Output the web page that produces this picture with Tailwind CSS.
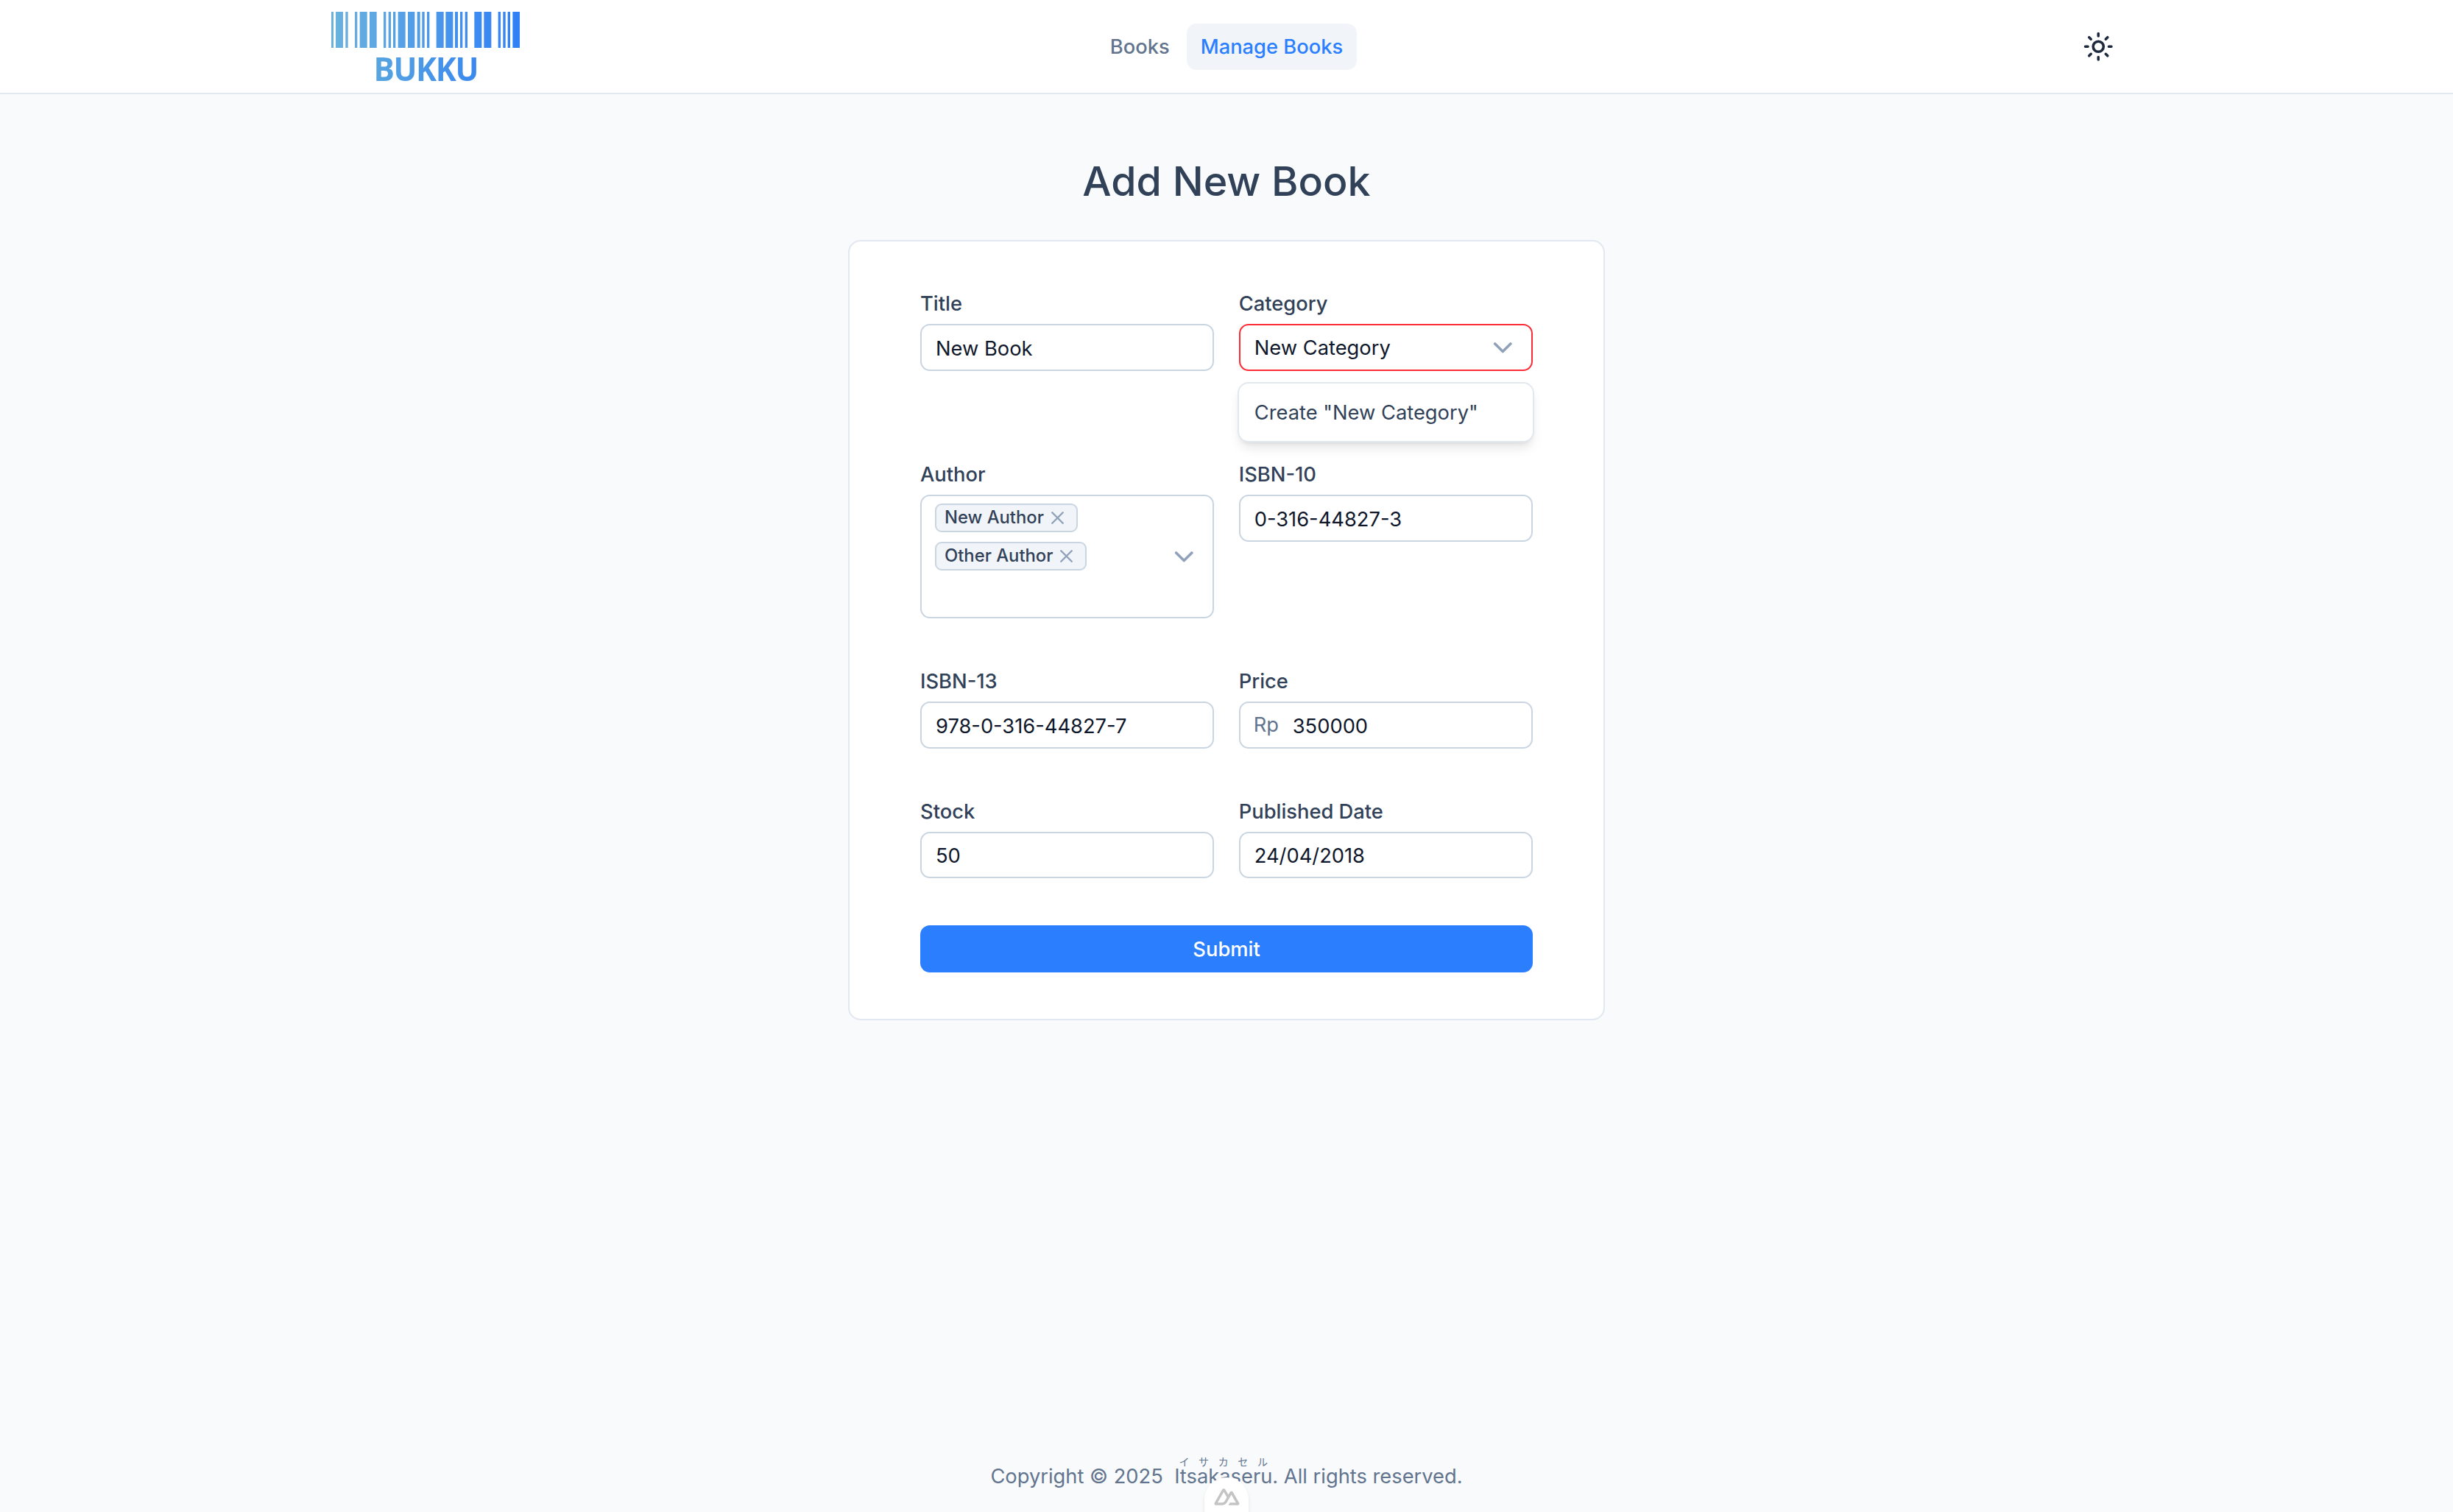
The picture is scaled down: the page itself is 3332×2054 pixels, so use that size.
<!DOCTYPE html>
<html lang="en">
<head>
  <meta charset="UTF-8" />
  <title>Bukku - Add New Book</title>
  <script src="https://cdn.jsdelivr.net/npm/@tailwindcss/browser@4"></script>
</head>
<body class="bg-[#f8fafc] min-h-screen flex flex-col font-['Inter',sans-serif] text-[27.3px] text-[#314158]">
  <!-- Header -->
  <header class="h-[128px] bg-white border-b-2 border-[#e2e8f0] px-[450px] grid grid-cols-[1fr_auto_1fr] items-center">
    <div class="flex flex-col w-[256px] items-center pt-[5px]">
      <svg class="w-[256px] h-[49px] mb-[6px]" viewBox="90 48 768 146" preserveAspectRatio="none">
        <defs>
          <linearGradient id="bars" gradientUnits="userSpaceOnUse" x1="90" x2="858" y1="0" y2="0">
            <stop offset="0" stop-color="#6bb3dd" />
            <stop offset="1" stop-color="#2f80f6" />
          </linearGradient>
        </defs>
        <g fill="url(#bars)">
          <rect x="90" y="48" width="9" height="146" /><rect x="108" y="48" width="30" height="146" /><rect x="148" y="48" width="10" height="146" />
          <rect x="186" y="48" width="10" height="146" /><rect x="206" y="48" width="30" height="146" /><rect x="246" y="48" width="29" height="146" />
          <rect x="303" y="48" width="10" height="146" /><rect x="323" y="48" width="10" height="146" /><rect x="342" y="48" width="10" height="146" />
          <rect x="362" y="48" width="30" height="146" /><rect x="402" y="48" width="28" height="146" /><rect x="440" y="48" width="12" height="146" />
          <rect x="460" y="48" width="10" height="146" /><rect x="480" y="48" width="10" height="146" /><rect x="518" y="48" width="30" height="146" />
          <rect x="556" y="48" width="30" height="146" /><rect x="594" y="48" width="12" height="146" /><rect x="615" y="48" width="10" height="146" />
          <rect x="635" y="48" width="10" height="146" /><rect x="673" y="48" width="30" height="146" /><rect x="712" y="48" width="30" height="146" />
          <rect x="770" y="48" width="10" height="146" /><rect x="790" y="48" width="10" height="146" /><rect x="809" y="48" width="10" height="146" />
          <rect x="829" y="48" width="29" height="146" />
        </g>
      </svg>
      <span class="font-['Open_Sans',sans-serif] font-bold text-[45px] leading-[44px] tracking-[-1.5px] scale-x-[.94] text-transparent bg-clip-text bg-gradient-to-r from-[#58a5e0] to-[#3a88ee]">BUKKU</span>
    </div>

    <nav class="flex items-center gap-[4px] font-medium">
      <a class="h-[63px] px-[19px] pt-[2px] rounded-[13px] flex items-center text-[#62748e]">Books</a>
      <a class="h-[63px] px-[19px] pt-[2px] rounded-[13px] flex items-center bg-[#f1f5f9] text-[#2b7fff]">Manage Books</a>
    </nav>

    <div class="flex justify-end">
      <button class="w-[42px] h-[42px] mr-[11px] text-[#1d293d]">
        <svg class="w-[42.5px] h-[42.5px]" viewBox="0 0 24 24" fill="none" stroke="currentColor" stroke-width="2" stroke-linecap="round" stroke-linejoin="round">
          <circle cx="12" cy="12" r="4" />
          <path d="M12 2v2M12 20v2M4.93 4.93l1.41 1.41M17.66 17.66l1.41 1.41M2 12h2M20 12h2M6.34 17.66l-1.41 1.41M19.07 4.93l-1.41 1.41" />
        </svg>
      </button>
    </div>
  </header>

  <!-- Main -->
  <main class="flex-1 flex flex-col items-center pt-[73px]">
    <h1 class="h-[90px] leading-[90px] text-[55.5px] font-medium text-[#314158] mb-[35px]">Add New Book</h1>

    <div class="w-[1028px] bg-white border-2 border-[#e2e8f0] rounded-[17px] px-[96px] py-[63px]">
      <form class="grid grid-cols-2 gap-x-[33.5px] gap-y-[64px]">
        <div>
          <label class="block h-[42px] leading-[44px] mb-[7px] font-medium">Title</label>
          <input value="New Book" class="w-full h-[63.75px] px-[19px] pt-[3px] bg-white border-2 border-[#cad5e2] rounded-[13px] text-[#0f172b]" />
        </div>

        <div class="relative pb-[55px]">
          <label class="block h-[42px] leading-[44px] mb-[7px] font-medium">Category</label>
          <div class="relative h-[63.75px] px-[19px] pt-[3px] flex items-center bg-white border-2 border-[#fb2c36] rounded-[13px] text-[#0f172b]">
            New Category
            <svg class="absolute right-[18px] top-[9px] w-[42.5px] h-[42.5px] text-[#90a1b9]" viewBox="0 0 24 24" fill="none" stroke="currentColor" stroke-width="2" stroke-linecap="round" stroke-linejoin="round"><path d="m6 9 6 6 6-6" /></svg>
          </div>
          <div class="absolute z-10 left-[-2px] right-[-2px] top-[128px] h-[82px] px-[21px] pt-[2px] flex items-center bg-white border-2 border-[#e2e8f0] rounded-[15px] shadow-lg">
            Create "New Category"
          </div>
        </div>

        <div>
          <label class="block h-[42px] leading-[44px] mb-[7px] font-medium">Author</label>
          <div class="relative h-[168px] pl-[18px] pt-[10px] bg-white border-2 border-[#cad5e2] rounded-[13px] flex flex-col items-start gap-[13px]">
            <span class="h-[39px] px-[11px] flex items-center gap-[4px] bg-[#f1f5f9] border-2 border-[#cad5e2] rounded-[9px] text-[23.8px] font-medium">
              New Author
              <svg class="w-[29px] h-[29px] text-[#90a1b9]" viewBox="0 0 24 24" fill="none" stroke="currentColor" stroke-width="2" stroke-linecap="round" stroke-linejoin="round"><path d="M18 6 6 18M6 6l12 12" /></svg>
            </span>
            <span class="h-[39px] px-[11px] flex items-center gap-[4px] bg-[#f1f5f9] border-2 border-[#cad5e2] rounded-[9px] text-[23.8px] font-medium">
              Other Author
              <svg class="w-[29px] h-[29px] text-[#90a1b9]" viewBox="0 0 24 24" fill="none" stroke="currentColor" stroke-width="2" stroke-linecap="round" stroke-linejoin="round"><path d="M18 6 6 18M6 6l12 12" /></svg>
            </span>
            <svg class="absolute right-[18px] top-[61px] w-[42.5px] h-[42.5px] text-[#90a1b9]" viewBox="0 0 24 24" fill="none" stroke="currentColor" stroke-width="2" stroke-linecap="round" stroke-linejoin="round"><path d="m6 9 6 6 6-6" /></svg>
          </div>
        </div>

        <div>
          <label class="block h-[42px] leading-[44px] mb-[7px] font-medium">ISBN-10</label>
          <input value="0-316-44827-3" class="w-full h-[63.75px] px-[19px] pt-[3px] bg-white border-2 border-[#cad5e2] rounded-[13px] text-[#0f172b]" />
        </div>

        <div>
          <label class="block h-[42px] leading-[44px] mb-[7px] font-medium">ISBN-13</label>
          <input value="978-0-316-44827-7" class="w-full h-[63.75px] px-[19px] pt-[3px] bg-white border-2 border-[#cad5e2] rounded-[13px] text-[#0f172b]" />
        </div>

        <div>
          <label class="block h-[42px] leading-[44px] mb-[7px] font-medium">Price</label>
          <div class="relative">
            <span class="absolute left-[20px] inset-y-0 pt-[2px] flex items-center text-[#62748e]">Rp</span>
            <input value="350000" class="w-full h-[63.75px] pl-[71px] pr-[19px] pt-[3px] bg-white border-2 border-[#cad5e2] rounded-[13px] text-[#0f172b]" />
          </div>
        </div>

        <div>
          <label class="block h-[42px] leading-[44px] mb-[7px] font-medium">Stock</label>
          <input value="50" class="w-full h-[63.75px] px-[19px] pt-[3px] bg-white border-2 border-[#cad5e2] rounded-[13px] text-[#0f172b]" />
        </div>

        <div>
          <label class="block h-[42px] leading-[44px] mb-[7px] font-medium">Published Date</label>
          <input value="24/04/2018" class="w-full h-[63.75px] px-[19px] pt-[3px] bg-white border-2 border-[#cad5e2] rounded-[13px] text-[#0f172b]" />
        </div>

        <button type="button" class="col-span-2 h-[64px] pt-[2px] bg-[#2b7fff] text-white font-medium rounded-[13px]">Submit</button>
      </form>
    </div>
  </main>

  <!-- Footer -->
  <footer class="relative h-[104px] flex items-center justify-center text-[#62748e]">
    <p>Copyright © 2025 &nbsp;<ruby>Itsakaseru<rt class="text-[14px] font-['Noto_Sans_CJK_JP',sans-serif]">イサカセル</rt></ruby>. All rights reserved.</p>
    <div class="absolute left-[1636px] top-[57px] w-[60px] h-[47px] bg-white rounded-t-[30px] shadow-md flex justify-center pt-[6px]">
      <svg class="w-[41px] h-[41px]" viewBox="0 0 512 512" fill="#c4c4c4"><path fill-rule="evenodd" d="M281.44 397.667H438.32C443.326 397.667 448.118 395.908 452.453 393.427C456.789 390.946 461.258 387.831 463.76 383.533C466.262 379.236 468.002 374.36 468 369.399C467.998 364.437 466.266 359.563 463.76 355.268L357.76 172.947C355.258 168.65 352.201 165.534 347.867 163.053C343.532 160.573 337.325 158.813 332.32 158.813C327.315 158.813 322.521 160.573 318.187 163.053C313.852 165.534 310.795 168.65 308.293 172.947L281.44 219.587L227.733 129.13C225.229 124.834 222.176 120.307 217.84 117.827C213.504 115.346 208.713 115 203.707 115C198.701 115 193.909 115.346 189.573 117.827C185.238 120.307 180.771 124.834 178.267 129.13L46.8267 355.268C44.3208 359.563 44.0022 364.437 44 369.399C43.9978 374.36 44.3246 379.235 46.8267 383.533C49.3288 387.83 53.7979 390.946 58.1333 393.427C62.4688 395.908 67.2603 397.667 72.2667 397.667H171.2C210.401 397.667 238.934 380.082 258.827 346.787L306.88 263.4L332.32 219.587L410.053 352.44H306.88L281.44 397.667ZM168.373 352.44H98.8L203.707 172.947L256 263.4L221.024 323.986C207.638 345.99 192.447 352.44 168.373 352.44Z" /></svg>
    </div>
  </footer>
</body>
</html>
